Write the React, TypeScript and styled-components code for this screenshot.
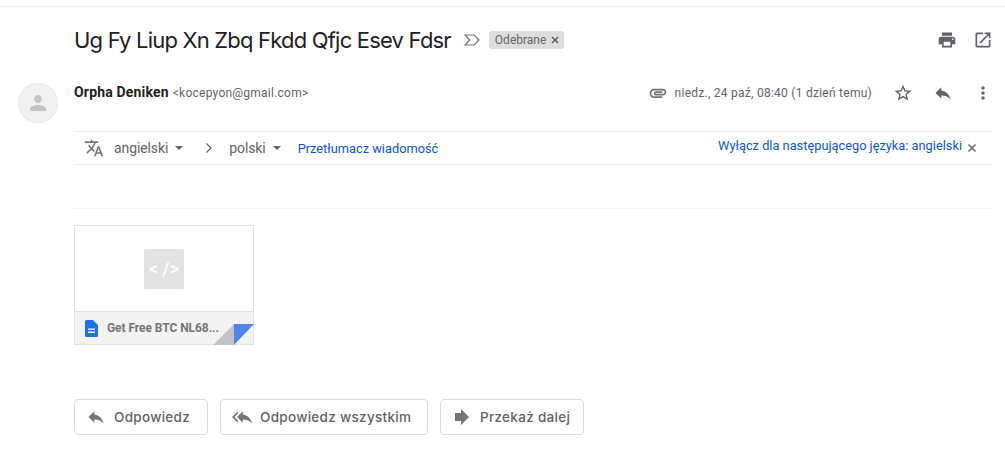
import React from "react";
import styled, { createGlobalStyle } from "styled-components";

const GlobalStyle = createGlobalStyle`
  html, body {
    margin: 0;
    padding: 0;
    background: #fff;
    font-family: Roboto, "Liberation Sans", sans-serif;
  }
`;

const Page = styled.div`
  width: 1005px;
  height: 458px;
  overflow: hidden;
  box-sizing: border-box;
  padding-top: 6px;
`;

const TopRule = styled.div`
  height: 1px;
  background: #eeeff0;
`;

const SubjectRow = styled.div`
  display: flex;
  align-items: center;
  height: 66px;
  padding-left: 74px;
  padding-right: 12px;
`;

const Subject = styled.h2`
  margin: 0;
  font-family: Inter, Roboto, sans-serif;
  font-size: 22px;
  font-weight: 400;
  line-height: 28px;
  color: #202124;
  letter-spacing: -0.8px;
`;

const ImportantIcon = styled.svg`
  margin-left: 13px;
  width: 16px;
  height: 16px;
`;

const Label = styled.span`
  display: flex;
  align-items: center;
  gap: 5px;
  height: 18px;
  margin-left: 9px;
  padding: 0 5px 0 6px;
  border-radius: 3px;
  background: #dddddd;
  color: #666;
  font-size: 12px;
`;

const TopActions = styled.div`
  margin-left: auto;
  display: flex;
  gap: 16px;
  align-items: center;
`;

const IconSvg = styled.svg<{ $fill?: string }>`
  display: block;
  width: 20px;
  height: 20px;
  fill: ${({ $fill }) => $fill ?? "#5f6368"};
  flex: none;
`;

const SenderRow = styled.div`
  display: flex;
  align-items: flex-start;
  padding: 10px 12px 0 18px;
  height: 48px;
`;

const Avatar = styled.div`
  width: 40px;
  height: 40px;
  border-radius: 50%;
  background: #f1f1f1;
  box-shadow: inset 0 0 0 1px #e9e9e9;
  display: flex;
  align-items: center;
  justify-content: center;
  flex: none;
`;

const Sender = styled.div`
  margin-left: 16px;
  display: flex;
  align-items: baseline;
  gap: 4px;
  line-height: 19px;
`;

const SenderName = styled.span`
  font-size: 14px;
  font-weight: 700;
  letter-spacing: 0.18px;
  color: #202124;
`;

const SenderEmail = styled.span`
  font-size: 12px;
  letter-spacing: 0.24px;
  color: #5f6368;
`;

const Meta = styled.div`
  margin-left: auto;
  display: flex;
  align-items: center;
  height: 20px;
`;

const DateText = styled.span`
  margin-left: 7px;
  font-size: 12px;
  letter-spacing: 0.26px;
  color: #5f6368;
`;

const MetaButtons = styled.div`
  display: flex;
  align-items: center;
  margin-left: 21px;
  gap: 20px;
`;

const TranslateBar = styled.div`
  display: flex;
  align-items: center;
  box-sizing: border-box;
  height: 34px;
  margin: 0 13px 0 74px;
  padding: 0 16px 0 10px;
  border-top: 1px solid #eeeff0;
  border-bottom: 1px solid #eeeff0;
`;

const Language = styled.span`
  display: flex;
  align-items: center;
  gap: 7px;
  font-size: 14px;
  letter-spacing: -0.1px;
  color: #5f6368;
`;

const SourceLanguage = styled(Language)`
  margin-left: 10px;
`;

const Caret = styled.span`
  width: 0;
  height: 0;
  border-left: 4px solid transparent;
  border-right: 4px solid transparent;
  border-top: 4px solid #5f6368;
`;

const Chevron = styled.svg`
  margin: 0 16px 0 22px;
  width: 8px;
  height: 12px;
`;

const TextLink = styled.a`
  font-size: 12.8px;
  color: #0b57d0;
  white-space: nowrap;
`;

const TranslateLink = styled(TextLink)`
  margin-left: 17px;
`;

const TurnOffLink = styled(TextLink)`
  margin-left: auto;
  margin-bottom: 5px;
`;

const CloseMark = styled.svg`
  margin-left: 6px;
  width: 8px;
  height: 8px;
`;

const Divider = styled.div`
  height: 0;
  margin: 43px 13px 0 74px;
  border-top: 1px dotted #e8e8e8;
`;

const Attachment = styled.div`
  position: relative;
  box-sizing: border-box;
  width: 180px;
  height: 120px;
  margin: 16px 0 0 74px;
  border: 1px solid #e2e2e2;
  display: flex;
  flex-direction: column;
`;

const Preview = styled.div`
  flex: 1;
  display: flex;
  align-items: center;
  justify-content: center;
`;

const CodeBadge = styled.div`
  width: 40px;
  height: 40px;
  border-radius: 2px;
  background: #e3e3e3;
  color: #fff;
  font-size: 18px;
  font-weight: 500;
  display: flex;
  align-items: center;
  justify-content: center;
  white-space: pre;
`;

const AttachmentFooter = styled.div`
  height: 32px;
  background: #f3f3f3;
  border-top: 1px solid #e2e2e2;
  display: flex;
  align-items: center;
  padding-left: 10px;
  gap: 9px;
`;

const DocIcon = styled.svg`
  flex: none;
  width: 13px;
  height: 17px;
`;

const AttachmentName = styled.span`
  font-size: 12px;
  font-weight: 700;
  letter-spacing: -0.06px;
  color: #757575;
`;

const Corner = styled.svg`
  position: absolute;
  right: -1px;
  bottom: -1px;
  width: 41px;
  height: 21px;
`;

const Actions = styled.div`
  display: flex;
  gap: 12px;
  margin: 54px 0 0 74px;
`;

const ActionButton = styled.button<{ $width: number }>`
  display: flex;
  align-items: center;
  gap: 8px;
  box-sizing: border-box;
  width: ${({ $width }) => $width}px;
  height: 36px;
  padding: 0 0 0 11px;
  background: #fff;
  border: 1px solid #dadce0;
  border-radius: 4px;
  color: #5f6368;
  font-family: Inter, Roboto, sans-serif;
  font-size: 13.5px;
  font-weight: 500;
  letter-spacing: 0.3px;
  white-space: nowrap;
`;

const ReplyPath = "M10 9V5l-7 7 7 7v-4.1c5 0 8.5 1.6 11 5.1-1-5-4-10-11-11z";
const ReplyAllPath = "M7 8V5l-7 7 7 7v-3l-4-4 4-4zm6 1V5l-7 7 7 7v-4.1c5 0 8.5 1.6 11 5.1-1-5-4-10-11-11z";
const ForwardPath = "M3.6 7.2h7.2V2.4l9.6 9.6-9.6 9.6v-4.8H3.6z";

function Icon({ d, fill }: { d: string; fill?: string }) {
  return (
    <IconSvg $fill={fill} viewBox="0 0 24 24">
      <path d={d} />
    </IconSvg>
  );
}

export default function App() {
  return (
    <Page>
      <GlobalStyle />
      <TopRule />
      <SubjectRow>
        <Subject>Ug Fy Liup Xn Zbq Fkdd Qfjc Esev Fdsr</Subject>
        <ImportantIcon viewBox="0 0 16 16" fill="none" stroke="#6f6f6f" strokeWidth="1.2">
          <path d="M1 3h9.2L15 8l-4.8 5H1l4.6-5z" />
        </ImportantIcon>
        <Label>
          Odebrane
          <svg width="8" height="8" viewBox="0 0 8 8" stroke="#555" strokeWidth="1.4">
            <path d="M1 1l6 6M7 1L1 7" />
          </svg>
        </Label>
        <TopActions>
          <Icon d="M19 8H5c-1.66 0-3 1.34-3 3v6h4v4h12v-4h4v-6c0-1.66-1.34-3-3-3zm-3 11H8v-5h8v5zm3-7c-.55 0-1-.45-1-1s.45-1 1-1 1 .45 1 1-.45 1-1 1zm-1-9H6v4h12V3z" />
          <Icon d="M19 19H5V5h7V3H5c-1.11 0-2 .9-2 2v14c0 1.1.89 2 2 2h14c1.1 0 2-.9 2-2v-7h-2v7zM14 3v2h3.59l-9.83 9.83 1.41 1.41L19 6.41V10h2V3h-7z" />
        </TopActions>
      </SubjectRow>
      <SenderRow>
        <Avatar>
          <svg width="24" height="24" viewBox="0 0 24 24" fill="#c4c4c4">
            <path d="M12 12c2.2 0 4-1.8 4-4s-1.8-4-4-4-4 1.8-4 4 1.8 4 4 4zm0 2c-2.7 0-8 1.3-8 4v2h16v-2c0-2.7-5.3-4-8-4z" />
          </svg>
        </Avatar>
        <Sender>
          <SenderName>Orpha Deniken</SenderName>
          <SenderEmail>&lt;kocepyon@gmail.com&gt;</SenderEmail>
        </Sender>
        <Meta>
          <Icon fill="#757575" d="M2 12.5C2 9.46 4.46 7 7.5 7H18c2.21 0 4 1.79 4 4s-1.79 4-4 4H9.5C8.12 15 7 13.88 7 12.5S8.12 10 9.5 10H17v2H9.41c-.55 0-.55 1 0 1H18c1.1 0 2-.9 2-2s-.9-2-2-2H7.5C5.57 9 4 10.57 4 12.5S5.57 16 7.5 16H17v2H7.5C4.46 18 2 15.54 2 12.5z" />
          <DateText>niedz., 24 paź, 08:40 (1 dzień temu)</DateText>
          <MetaButtons>
            <Icon d="M22 9.24l-7.19-.62L12 2 9.19 8.63 2 9.24l5.46 4.73L5.82 21 12 17.27 18.18 21l-1.63-7.03L22 9.24zM12 15.4l-3.76 2.27 1-4.28-3.32-2.88 4.38-.38L12 6.1l1.71 4.04 4.38.38-3.32 2.88 1 4.28L12 15.4z" />
            <Icon d={ReplyPath} />
            <Icon d="M12 8c1.1 0 2-.9 2-2s-.9-2-2-2-2 .9-2 2 .9 2 2 2zm0 2c-1.1 0-2 .9-2 2s.9 2 2 2 2-.9 2-2-.9-2-2-2zm0 6c-1.1 0-2 .9-2 2s.9 2 2 2 2-.9 2-2-.9-2-2-2z" />
          </MetaButtons>
        </Meta>
      </SenderRow>
      <TranslateBar>
        <Icon fill="#757575" d="M12.87 15.07l-2.54-2.51.03-.03A17.52 17.52 0 0014.07 6H17V4h-7V2H8v2H1v1.99h11.17C11.5 7.92 10.44 9.75 9 11.35 8.07 10.32 7.3 9.19 6.69 8h-2c.73 1.63 1.73 3.17 2.98 4.56l-5.09 5.02L4 19l5-5 3.11 3.11.76-2.04zM18.5 10h-2L12 22h2l1.12-3h4.75L21 22h2l-4.5-12zm-2.62 7l1.62-4.33L19.12 17h-3.24z" />
        <SourceLanguage>
          angielski <Caret />
        </SourceLanguage>
        <Chevron viewBox="0 0 8 12" fill="none" stroke="#5f6368" strokeWidth="1.2">
          <path d="M1.5 1.5L6 6l-4.5 4.5" />
        </Chevron>
        <Language>
          polski <Caret />
        </Language>
        <TranslateLink>Przetłumacz wiadomość</TranslateLink>
        <TurnOffLink>Wyłącz dla następującego języka: angielski</TurnOffLink>
        <CloseMark viewBox="0 0 8 8" stroke="#777" strokeWidth="1.6">
          <path d="M.5.5l7 7M7.5.5l-7 7" />
        </CloseMark>
      </TranslateBar>
      <Divider />
      <Attachment>
        <Preview>
          <CodeBadge>&lt; /&gt;</CodeBadge>
        </Preview>
        <AttachmentFooter>
          <DocIcon viewBox="0 0 13 17">
            <path fill="#1a73e8" d="M1.5 0H8l5 5v10.5a1.5 1.5 0 01-1.5 1.5h-10A1.5 1.5 0 010 15.5v-14A1.5 1.5 0 011.5 0z" />
            <path fill="#fff" d="M3 8.5h7v1.4H3zM3 11.5h7v1.4H3z" />
          </DocIcon>
          <AttachmentName>Get Free BTC NL68...</AttachmentName>
        </AttachmentFooter>
        <Corner viewBox="0 0 41 21">
          <path fill="#c4c4c4" d="M0 21L21 0v21z" />
          <path fill="#4f86ec" d="M21 0h20L21 21z" />
        </Corner>
      </Attachment>
      <Actions>
        <ActionButton $width={134}>
          <Icon fill="#757575" d={ReplyPath} />
          Odpowiedz
        </ActionButton>
        <ActionButton $width={208}>
          <Icon fill="#757575" d={ReplyAllPath} />
          Odpowiedz wszystkim
        </ActionButton>
        <ActionButton $width={144}>
          <Icon fill="#757575" d={ForwardPath} />
          Przekaż dalej
        </ActionButton>
      </Actions>
    </Page>
  );
}
